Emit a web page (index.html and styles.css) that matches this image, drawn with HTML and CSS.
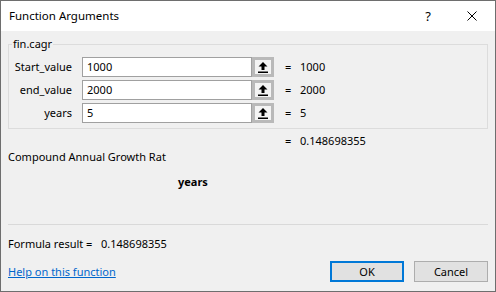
FILE: index.html
```html
<!DOCTYPE html>
<html>
<head>
<meta charset="utf-8">
<link rel="stylesheet" href="styles.css">
</head>
<body>
<div class="window">
  <div class="titlebar">
    <span class="title">Function Arguments</span>
    <span class="help">?</span>
    <svg class="close" width="10" height="10" viewBox="0 0 10 10"><path d="M0.5 0.5 L9.5 9.5 M9.5 0.5 L0.5 9.5" stroke="#000" stroke-width="1" fill="none"/></svg>
  </div>
  <div class="content">
    <fieldset class="group">
      <legend>fin.cagr</legend>
      <div class="row">
        <span class="label">Start_value</span>
        <span class="input">1000</span>
        <span class="collapse"><svg width="10" height="11" viewBox="0 0 10 11"><path d="M5 0 L9.5 4.5 L6.5 4.5 L6.5 8 L3.5 8 L3.5 4.5 L0.5 4.5 Z" fill="#000"/><rect x="0" y="9.5" width="10" height="1.5" fill="#000"/></svg></span>
        <span class="eq">=</span>
        <span class="val">1000</span>
      </div>
      <div class="row">
        <span class="label">end_value</span>
        <span class="input">2000</span>
        <span class="collapse"><svg width="10" height="11" viewBox="0 0 10 11"><path d="M5 0 L9.5 4.5 L6.5 4.5 L6.5 8 L3.5 8 L3.5 4.5 L0.5 4.5 Z" fill="#000"/><rect x="0" y="9.5" width="10" height="1.5" fill="#000"/></svg></span>
        <span class="eq">=</span>
        <span class="val">2000</span>
      </div>
      <div class="row">
        <span class="label">years</span>
        <span class="input">5</span>
        <span class="collapse"><svg width="10" height="11" viewBox="0 0 10 11"><path d="M5 0 L9.5 4.5 L6.5 4.5 L6.5 8 L3.5 8 L3.5 4.5 L0.5 4.5 Z" fill="#000"/><rect x="0" y="9.5" width="10" height="1.5" fill="#000"/></svg></span>
        <span class="eq">=</span>
        <span class="val">5</span>
      </div>
    </fieldset>
    <div class="result"><span class="eq">=</span><span class="val">0.148698355</span></div>
    <div class="desc">Compound Annual Growth Rat</div>
    <div class="argname">years</div>
    <div class="sep"></div>
    <div class="formula"><span class="flabel">Formula result =</span><span>0.148698355</span></div>
    <div class="bottom">
      <a class="link" href="#">Help on this function</a>
      <div class="buttons">
        <button class="btn ok">OK</button>
        <button class="btn">Cancel</button>
      </div>
    </div>
  </div>
</div>
</body>
</html>
```
FILE: styles.css
```css
html, body {
  margin: 0;
  padding: 0;
}
body {
  font-family: "Noto Sans", "Open Sans", sans-serif;
  font-size: 11px;
  color: #000;
  background: #f0f0f0;
}
.window {
  width: 496px;
  height: 292px;
  box-sizing: border-box;
  border: 1px solid #6e6e6e;
  display: flex;
  flex-direction: column;
}
.titlebar {
  height: 30px;
  flex: none;
  background: #fff;
  display: flex;
  align-items: center;
  padding-left: 8px;
}
.title {
  flex: 1;
  font-size: 11.5px;
  line-height: 16px;
}
.help {
  margin-right: 36px;
  font-size: 13px;
  line-height: 16px;
}
.close {
  margin-right: 18px;
  display: block;
}
.content {
  flex: 1;
  padding: 0 7px;
  display: flex;
  flex-direction: column;
}
.group {
  margin: 5px 0 0 0;
  border: 1px solid #dcdcdc;
  padding: 5px 0 5px 0;
  display: flex;
  flex-direction: column;
  gap: 3px;
}
.group legend {
  margin-left: 3px;
  padding: 0 1px;
  line-height: 16px;
}
.row {
  display: flex;
  align-items: center;
  height: 20px;
}
.label {
  width: 63px;
  text-align: right;
  margin-right: 10px;
  line-height: 16px;
}
.input {
  width: 170px;
  height: 20px;
  box-sizing: border-box;
  background: #fff;
  border: 1px solid #a0a0a0;
  padding-left: 4px;
  line-height: 18px;
}
.collapse {
  width: 22px;
  height: 20px;
  box-sizing: border-box;
  border: 3px solid #b9b9b9;
  background: #f4f4f4;
  display: flex;
  align-items: center;
  justify-content: center;
}
.collapse svg {
  display: block;
}
.eq {
  margin-left: 11px;
  width: 8px;
  line-height: 16px;
}
.val {
  margin-left: 7px;
  line-height: 16px;
}
.result {
  display: flex;
  margin-top: 4px;
  padding-left: 266px;
  height: 16px;
}
.desc {
  margin-top: 0;
  height: 16px;
  line-height: 16px;
}
.argname {
  margin-top: 9px;
  padding-left: 170px;
  font-weight: bold;
  line-height: 16px;
  height: 16px;
}
.sep {
  margin-top: 34px;
  height: 1px;
  background: #d9d9d9;
}
.formula {
  margin-top: 11px;
  display: flex;
  line-height: 16px;
  height: 16px;
}
.flabel {
  width: 93px;
}
.bottom {
  margin-top: 9px;
  display: flex;
  align-items: center;
  justify-content: space-between;
}
.link {
  color: #0066cc;
  text-decoration: underline;
  line-height: 16px;
}
.buttons {
  display: flex;
  gap: 10px;
}
.btn {
  width: 74px;
  height: 21px;
  box-sizing: border-box;
  background: #e1e1e1;
  border: 1px solid #adadad;
  font-family: "Noto Sans", "Open Sans", sans-serif;
  font-size: 11px;
  color: #000;
  padding: 0;
  margin: 0;
  line-height: 17px;
}
.btn.ok {
  border: 2px solid #0078d7;
}
```
